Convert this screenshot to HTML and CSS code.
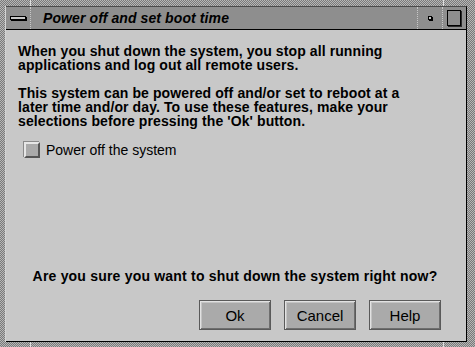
FILE: index.html
```html
<!DOCTYPE html>
<html lang="en">
<head>
    <meta charset="UTF-8">
    <title>Power off and set boot time</title>
    <link rel="stylesheet" href="styles.css">
</head>
<body>

    <div class="window">
        <span class="mark mark-tl"></span>
        <span class="mark mark-tr"></span>
        <span class="mark mark-bl"></span>
        <span class="mark mark-br"></span>

        <div class="titlebar">
            <div class="tb-btn tb-menu"><span class="menu-bar"></span></div>
            <div class="title">Power off and set boot time</div>
            <div class="tb-btn tb-min"><span class="min-dot"></span></div>
            <div class="tb-btn tb-max"><span class="max-box"></span></div>
        </div>

        <div class="content">
            <p class="text">When you shut down the system, you stop all running<br>applications and log out all remote users.</p>
            <p class="text">This system can be powered off and/or set to reboot at a<br>later time and/or day. To use these features, make your<br>selections before pressing the 'Ok' button.</p>

            <label class="check">
                <span class="check-box"></span>
                <span class="check-label">Power off the system</span>
            </label>

            <p class="question">Are you sure you want to shut down the system right now?</p>

            <div class="buttons">
                <button class="btn">Ok</button>
                <button class="btn">Cancel</button>
                <button class="btn">Help</button>
            </div>
        </div>
    </div>

</body>
</html>
```

FILE: styles.css
```css
html, body { margin: 0; padding: 0; }
body { width: 475px; height: 347px; box-sizing: border-box; padding: 6px 8px 5px 5px; font-family: "Liberation Sans", Arial, sans-serif; color: #000; background: repeating-conic-gradient(#7a7a7a 0 25%, #b6b6b6 0 50%) 0 0 / 2px 2px; overflow: hidden; }

.window { position: relative; height: 336px; display: flex; flex-direction: column; border-left: 1px solid #d4d4d4; }

/* resize handle marks in the frame */
.mark { position: absolute; background: #e0e0e0; }
.mark-tl { left: 24px; top: -6px; width: 1px; height: 6px; }
.mark-tr { right: 23px; top: -6px; width: 1px; height: 6px; }
.mark-bl { left: 24px; bottom: -5px; width: 1px; height: 5px; }
.mark-br { right: 23px; bottom: -5px; width: 1px; height: 5px; }

.titlebar { height: 22px; display: flex; align-items: stretch; background: #8e8e8e; border-top: 1px solid #4a4a4a; border-bottom: 1px solid #000; border-right: 1px solid #000; }
.tb-btn { display: flex; align-items: center; justify-content: center; }
.tb-menu { width: 24px; border-right: 1px dotted #c8c8c8; }
.tb-min { width: 24px; border-left: 1px dotted #c8c8c8; }
.tb-max { width: 23px; border-left: 1px dotted #c8c8c8; }
.title { flex: 1; padding-left: 12px; font-size: 14px; font-weight: bold; font-style: italic; line-height: 22px; letter-spacing: 0.1px; white-space: nowrap; }

.menu-bar { width: 14px; height: 2px; border: 1px solid #000; background: #c8c8c8; box-shadow: 1px 1px 0 #000; }
.min-dot { width: 2px; height: 2px; border: 1px solid #000; background: #c8c8c8; box-shadow: 1px 1px 0 #000; }
.max-box { width: 12px; height: 14px; border: 1px solid #000; background: #8e8e8e; box-shadow: 1px 1px 0 #2a2a2a; margin-left: -1px; }

.content { flex: 1; display: flex; flex-direction: column; background: #c8c8c8; border-right: 1px solid #000; border-bottom: 1px solid #000; padding: 14px 0 11px 0; }
.text { margin: 0 0 14px 12px; font-size: 14px; font-weight: bold; line-height: 14px; letter-spacing: 0.1px; white-space: nowrap; }

.check { display: flex; align-items: center; margin: 0 0 0 18px; height: 16px; }
.check-box { width: 12px; height: 12px; background: #aaaaaa; border: 2px solid; border-color: #e6e6e6 #555 #555 #e6e6e6; box-shadow: -1px -1px 0 #8a8a8a; }
.check-label { margin-left: 6px; font-size: 14px; }

.question { margin: auto 0 0 0; text-align: center; font-size: 14px; font-weight: bold; line-height: 14px; letter-spacing: 0.2px; padding-right: 2px; }

.buttons { display: flex; justify-content: flex-end; gap: 13px; margin-top: 17px; padding-right: 25px; }
.btn { width: 72px; height: 30px; padding: 0; font-family: "Liberation Sans", Arial, sans-serif; font-size: 15px; color: #000; background: #aaaaaa; border: 1px solid #5a5a5a; box-shadow: inset 1px 1px 0 #e2e2e2, inset -1px -1px 0 #6e6e6e, inset 2px 2px 0 #c4c4c4; cursor: pointer; }
```
